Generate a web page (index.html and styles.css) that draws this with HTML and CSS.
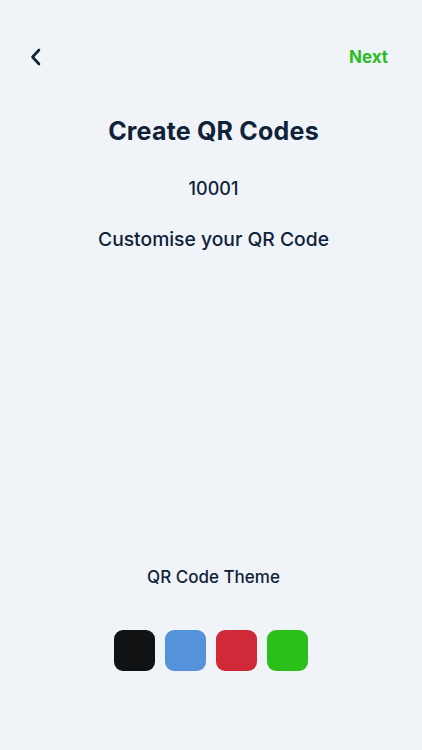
FILE: index.html
```html
<!DOCTYPE html>
<html lang="en">
<head>
    <meta charset="UTF-8">
    <meta name="viewport" content="width=device-width, initial-scale=1.0">
    <title>Create QR Codes</title>
    <link rel="stylesheet" href="styles.css">
</head>
<body>
    <div class="screen">
        <div class="top-bar">
            <button class="back-btn" aria-label="Back">
                <svg width="14" height="18" viewBox="0 0 14 18">
                    <path d="M10 2 L3.5 9 L10 16" fill="none" stroke="#0f2238" stroke-width="2.6" stroke-linecap="round" stroke-linejoin="round"/>
                </svg>
            </button>
            <a class="next-link" href="#">Next</a>
        </div>

        <h1 class="title">Create QR Codes</h1>
        <div class="code-id">10001</div>
        <div class="subtitle">Customise your QR Code</div>

        <div class="spacer"></div>

        <div class="theme-label">QR Code Theme</div>
        <div class="swatches">
            <div class="swatch black"></div>
            <div class="swatch blue"></div>
            <div class="swatch red"></div>
            <div class="swatch green"></div>
        </div>
    </div>
</body>
</html>
```

FILE: styles.css
```css
body {
    margin: 0;
    background-color: #f0f4f9;
    font-family: 'Inter', 'Noto Sans', sans-serif;
    color: #0f2238;
}

.screen {
    height: 750px;
    display: flex;
    flex-direction: column;
    align-items: center;
}

.top-bar {
    align-self: stretch;
    display: flex;
    justify-content: space-between;
    align-items: center;
    padding: 46px 34px 0 26px;
    height: 22px;
}

.back-btn {
    background: none;
    border: none;
    padding: 0;
    width: 20px;
    height: 22px;
    display: flex;
    align-items: center;
    justify-content: center;
    cursor: pointer;
}

.next-link {
    color: #2dbd1f;
    font-weight: 700;
    font-size: 17px;
    text-decoration: none;
}

.title,
.code-id,
.subtitle,
.theme-label {
    padding-left: 5px;
}

.title {
    margin: 48px 0 0;
    font-size: 25px;
    font-weight: 700;
    letter-spacing: 0.2px;
}

.code-id {
    margin-top: 32px;
    font-size: 18px;
    font-weight: 500;
}

.subtitle {
    margin-top: 28px;
    font-size: 19.3px;
    font-weight: 500;
}

.spacer {
    flex: 1;
}

.theme-label {
    font-size: 17px;
    font-weight: 500;
}

.swatches {
    display: flex;
    gap: 10px;
    margin-top: 43px;
    margin-bottom: 79px;
}

.swatch {
    width: 41px;
    height: 41px;
    border-radius: 9px;
}

.black { background-color: #111213; }
.blue { background-color: #5592dc; }
.red { background-color: #d02a39; }
.green { background-color: #2cbf1a; }
```
